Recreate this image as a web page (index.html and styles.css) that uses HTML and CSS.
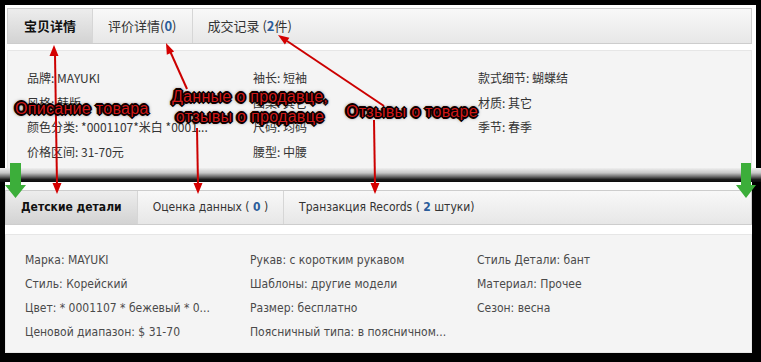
FILE: index.html
```html
<!DOCTYPE html>
<html lang="ru">
<head>
<meta charset="UTF-8" />
<meta name="viewport" content="width=device-width, initial-scale=1.0" />
<title>宝贝详情 / Детские детали</title>
<link rel="stylesheet" href="styles.css">
</head>
<body>
  <div class="shot">

    <!-- original (chinese) block -->
    <section class="pane pane-cn">
      <ul class="tabs">
        <li class="tab on">宝贝详情</li>
        <li class="tab">评价详情(<b>0</b>)</li>
        <li class="tab last">成交记录 (<b>2</b>件)</li>
      </ul>
      <div class="attrs">
        <ul class="col c1">
          <li>品牌: MAYUKI</li>
          <li>风格: 韩版</li>
          <li>颜色分类: *0001107*米白 *0001...</li>
          <li>价格区间: 31-70元</li>
        </ul>
        <ul class="col c2">
          <li>袖长: 短袖</li>
          <li>图案: 其它</li>
          <li>尺码: 均码</li>
          <li>腰型: 中腰</li>
        </ul>
        <ul class="col c3">
          <li>款式细节: 蝴蝶结</li>
          <li>材质: 其它</li>
          <li>季节: 春季</li>
        </ul>
      </div>
    </section>

    <div class="divider"></div>

    <!-- translated block -->
    <section class="pane pane-ru">
      <ul class="tabs">
        <li class="tab on">Детские детали</li>
        <li class="tab">Оценка данных ( <b>0</b> )</li>
        <li class="tab last">Транзакция Records ( <b>2</b> штуки)</li>
      </ul>
      <div class="attrs">
        <ul class="col c1">
          <li>Марка: MAYUKI</li>
          <li>Стиль: Корейский</li>
          <li>Цвет: * 0001107 * бежевый * 0...</li>
          <li>Ценовой диапазон: $ 31-70</li>
        </ul>
        <ul class="col c2">
          <li>Рукав: с коротким рукавом</li>
          <li>Шаблоны: другие модели</li>
          <li>Размер: бесплатно</li>
          <li>Поясничный типа: в поясничном...</li>
        </ul>
        <ul class="col c3">
          <li>Стиль Детали: бант</li>
          <li>Материал: Прочее</li>
          <li>Сезон: весна</li>
        </ul>
      </div>
    </section>

    <!-- annotations drawn over the screenshot -->
    <svg class="arrows" width="761" height="362" viewBox="0 0 761 362">
      <g stroke="#cc0000" stroke-width="2" fill="none">
        <line x1="55" y1="54" x2="57" y2="185"/>
        <line x1="187" y1="89" x2="170" y2="51"/>
        <line x1="197" y1="128" x2="198" y2="185"/>
        <line x1="384" y1="106" x2="287" y2="41"/>
        <line x1="374" y1="120" x2="375" y2="185"/>
      </g>
      <g fill="#d40000">
        <polygon points="54,45 49.5,56 58.5,56"/>
        <polygon points="57,194 52.5,183 61.5,183"/>
        <polygon points="166,43 174.1,51.5 166.8,54.7"/>
        <polygon points="198,194 193.5,183 202.5,183"/>
        <polygon points="278,35 289.4,37.8 284.9,44.4"/>
        <polygon points="375,194 370.5,183 379.5,183"/>
      </g>
      <g fill="#3cae3a">
        <polygon points="10,163 21,163 21,185 26,185 15.5,198 5,185 10,185"/>
        <polygon points="741,163 751,163 751,185 756,185 746,198 736,185 741,185"/>
      </g>
    </svg>
    <p class="note n1">Описание товара</p>
    <p class="note n2">Данные о продавце,<br>отзывы о продавце</p>
    <p class="note n3">Отзывы о товаре</p>
  </div>
</body>
</html>
```

FILE: styles.css
```css
/* -------------------------------------------------------------
   Reset & globals
------------------------------------------------------------- */
*{box-sizing:border-box;margin:0;padding:0}
ul{list-style:none}
body{
  background:#000;
  width:761px;height:362px;overflow:hidden;
  font-family:"Liberation Sans",Arial,sans-serif;
}
.shot{position:relative;height:362px;padding-top:5px}

/* -------------------------------------------------------------
   Panes
------------------------------------------------------------- */
.pane{background:#fff}
.pane-cn{
  margin:0 5px;
  padding:3px 4px 0 2px;
  font-family:"Noto Sans CJK SC",sans-serif;
}
.pane-ru{
  margin:0 9px 0 5px;
  padding-top:8px;
  height:171px;
  font-family:"DejaVu Sans Condensed","DejaVu Sans",sans-serif;
}

/* tabs */
.tabs{
  display:flex;
  height:36px;
  border:1px solid #cdcdcd;
  background:linear-gradient(#f8f8f8,#e7e7e7);
}
.tab{
  line-height:34px;
  padding:0 15px;
  border-right:1px solid #d6d6d6;
  color:#333;font-size:13px;
  white-space:pre;
}
.tab.on{
  background:linear-gradient(#ededed,#d3d3d3);
  font-weight:bold;color:#111;
  padding:0 16px;
}
.tab.last{border-right:0}
.tab b{color:#2b5d9a}

.pane-ru .tabs{height:35px}
.pane-ru .tab{font-size:12px;padding:0 15px;line-height:33px}

/* attribute grid */
.attrs{
  display:flex;
  margin-top:6px;
  height:118px;
  padding:15px 0 0 19px;
  background:#f4f4f4;
  border:1px solid #e6e6e6;border-bottom:0;
  font-size:12px;color:#333;
}
.col{line-height:24.5px;white-space:nowrap}
.c1{width:226px}
.c2{width:225px}

.pane-ru .attrs{
  margin-top:9px;
  height:119px;
  padding:13px 0 0 19px;
  color:#4a4a4a;
  border-bottom:1px solid #e6e6e6;
}
.pane-ru .col{line-height:24px}
.pane-ru .c1{width:225px}
.pane-ru .c2{width:227px}

/* dark seam between the two screenshots */
.divider{
  height:14px;
  background:linear-gradient(#efefef,#c6c6c6 35%,#6a6a6a 62%,#1c1c1c 82%,#0c0c0c);
}

/* -------------------------------------------------------------
   Annotations
------------------------------------------------------------- */
.arrows{position:absolute;left:0;top:0;pointer-events:none}
.note{
  position:absolute;
  font-size:16px;line-height:20px;
  letter-spacing:.3px;
  color:#d01818;
  white-space:nowrap;
  text-shadow:
    1px 0 0 #000,-1px 0 0 #000,0 1px 0 #000,0 -1px 0 #000,
    2px 0 0 #1a0000,-2px 0 0 #1a0000,0 2px 0 #1a0000,0 -2px 0 #1a0000,
    1px 1px 0 #000,-1px -1px 0 #000,1px -1px 0 #000,-1px 1px 0 #000,
    0 0 3px #000,0 0 4px #000;
}
.n1{left:15px;top:99px}
.n2{left:171px;top:87px;width:158px;text-align:center}
.n3{left:346px;top:102px}
```
